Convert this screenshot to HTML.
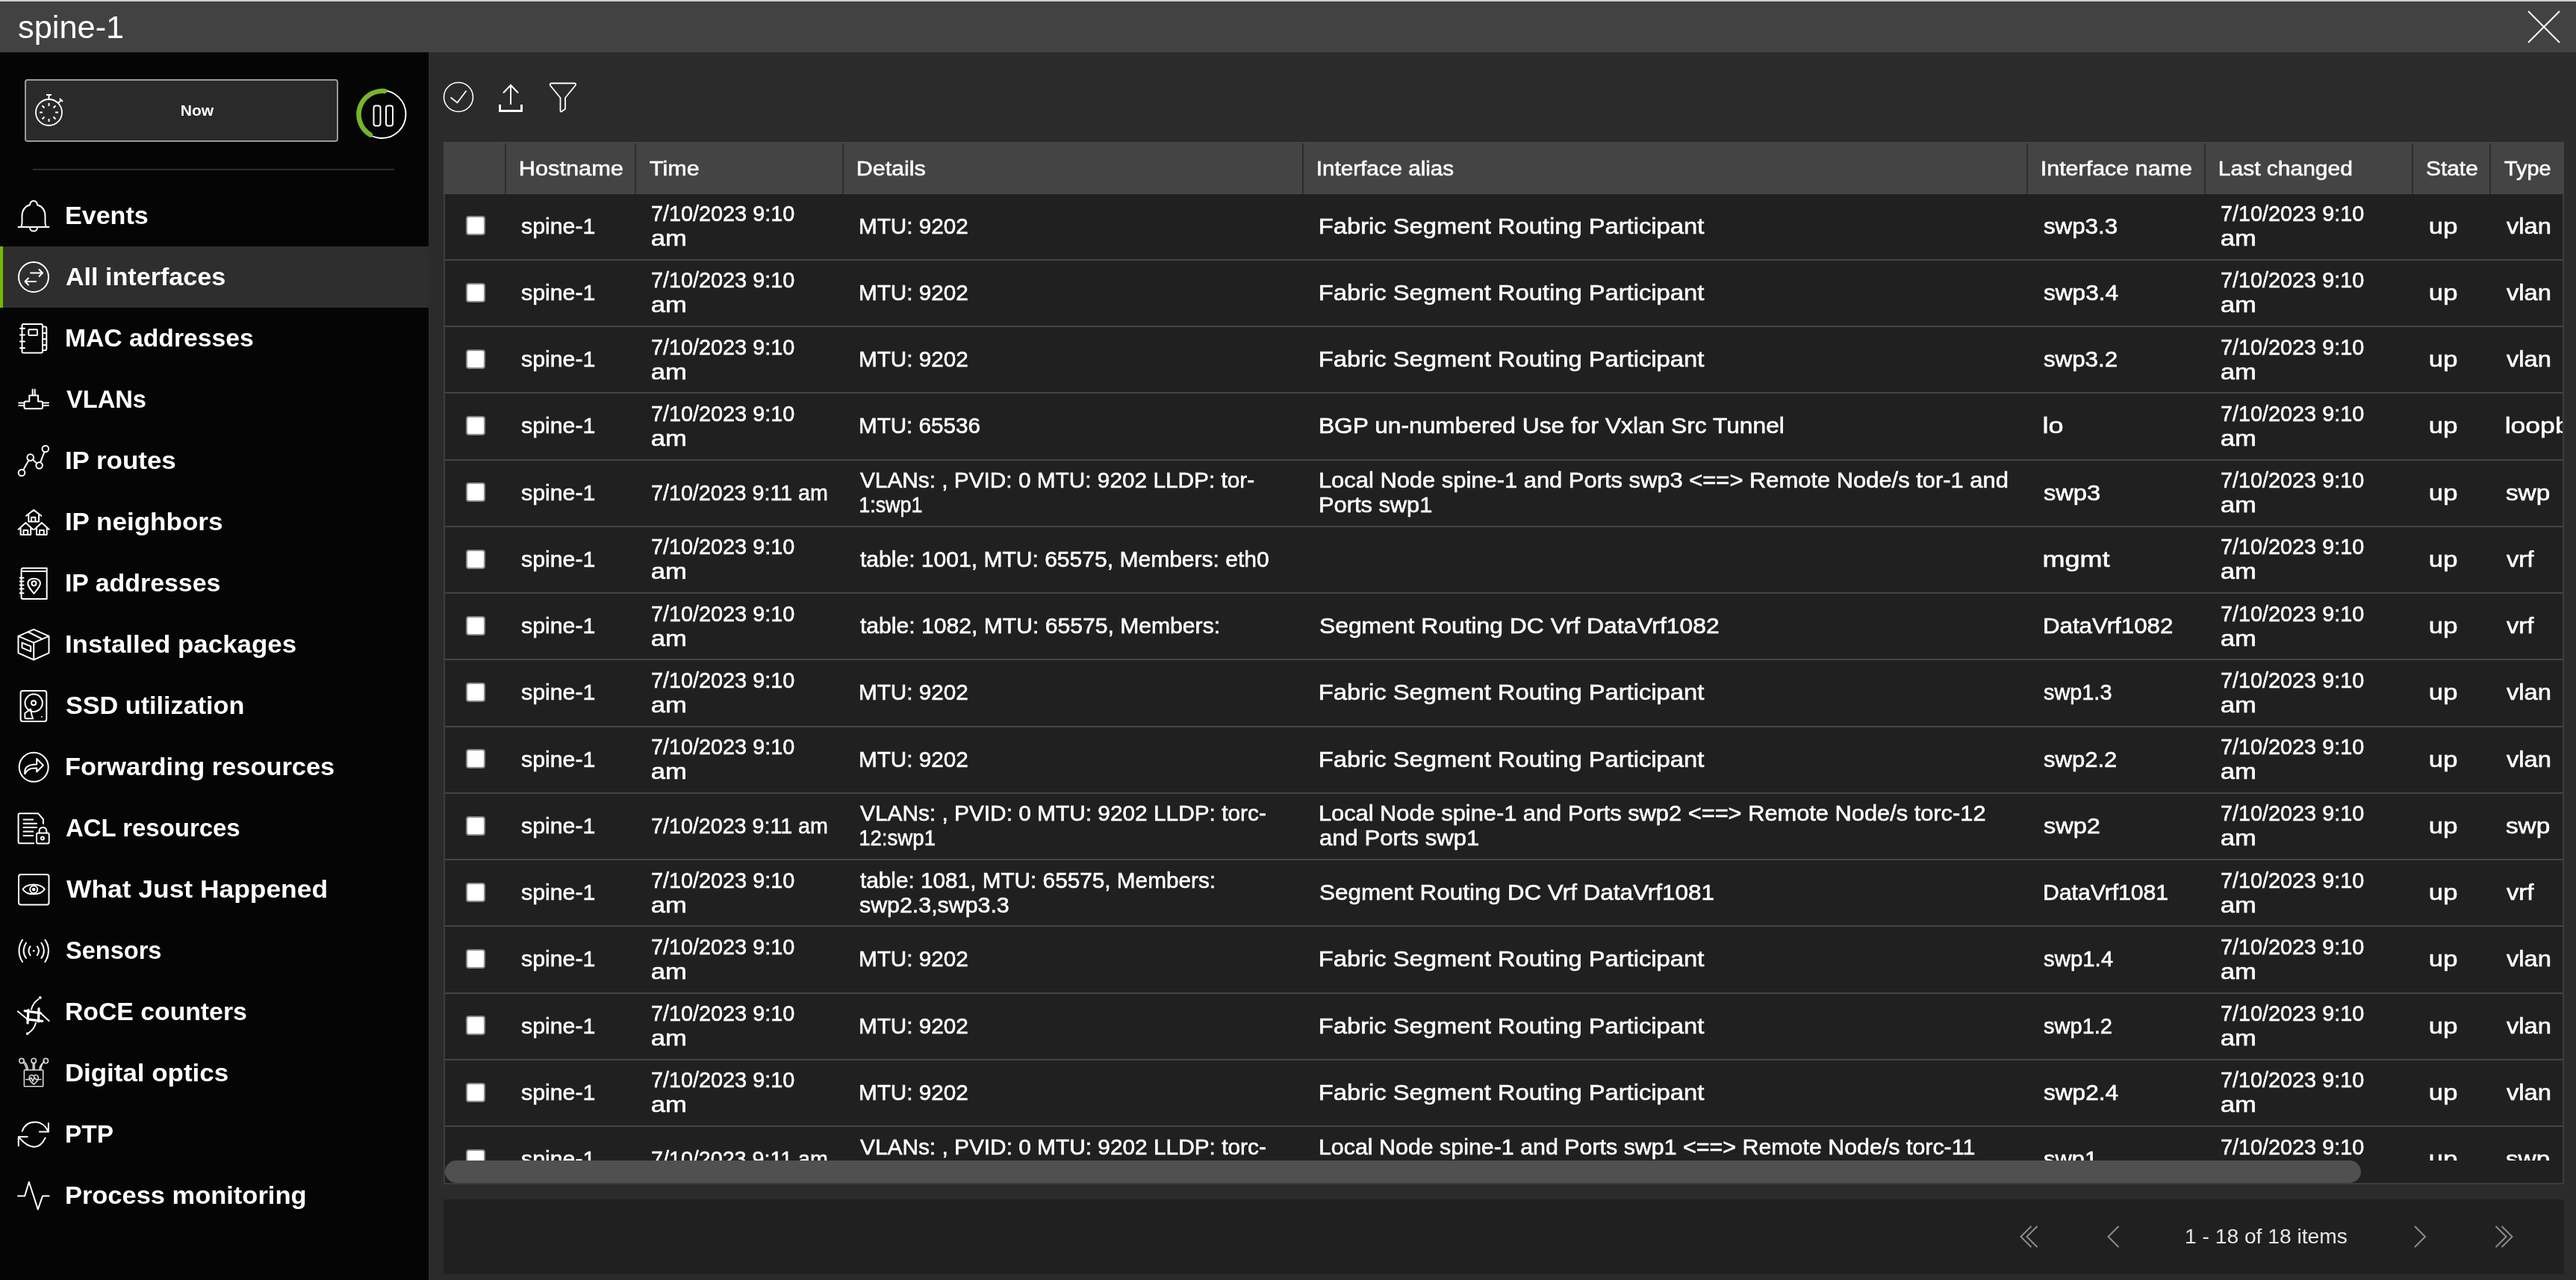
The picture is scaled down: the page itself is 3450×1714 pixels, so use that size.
<!DOCTYPE html>
<html><head><meta charset="utf-8"><title>spine-1</title><style>
*{margin:0;padding:0;box-sizing:border-box}
html,body{width:3450px;height:1714px;overflow:hidden;background:#2b2b2b;font-family:"Liberation Sans", sans-serif;color:#fff}
.abs{position:absolute}
#root{position:absolute;left:0;top:0;width:3450px;height:1714px;will-change:transform}
#topstrip{position:absolute;left:0;top:0;width:3450px;height:2px;background:#cdcdcd}
#title{position:absolute;left:0;top:2px;width:3450px;height:68px;background:#424242}
#title .t{position:absolute;left:24.6px;top:10.8px;font-size:42px;line-height:48px;font-weight:normal;color:#fff}
#side{position:absolute;left:0;top:70px;width:574px;height:1644px;background:#050505}
.active{position:absolute;left:0;width:574px;height:82px;background:#2e2e2e;border-left:4px solid #76b900}
.nic{position:absolute;left:24px}
.nl{position:absolute;left:88.5px;height:82px;line-height:82px;font-size:33px;font-weight:bold;white-space:nowrap}
#table{position:absolute;left:594px;top:190px;width:2840px;height:1396px;border:2px solid #3c3c3c;background:#202020;overflow:hidden}
.hdr{position:absolute;left:594px;top:190px;width:2840px;height:70px;background:#444}
.hc{position:absolute;top:191px;height:70px;line-height:70px;font-size:27px;white-space:nowrap;color:#fafafa;-webkit-text-stroke:0.6px #fafafa}
.hsep{position:absolute;top:192px;width:2px;height:68px;background:#2e2e2e}
.row{position:absolute;left:596px;width:2836px;background:#202020}
.sep{position:absolute;left:596px;width:2836px;height:2px;background:#454545}
.cb{position:absolute;left:624px;width:26px;height:26px;background:#fff;border:2px solid #8a8a8a;border-radius:4px}
.c{position:absolute;display:flex;align-items:center;white-space:nowrap;font-size:30px;line-height:33px;color:#fff;-webkit-text-stroke:0.6px #fff}
#clip{position:absolute;left:596px;top:260px;width:2836px;height:1294px;overflow:hidden}
#clip > div{}
#scroll{position:absolute;left:596px;top:1554px;width:2836px;height:30px;background:#202020}
#thumb{position:absolute;left:596px;top:1554px;width:2566px;height:30px;background:#505050;border-radius:15px}
#pag{position:absolute;left:594px;top:1606px;width:2840px;height:100px;background:#202020}
#pag .t{position:absolute;height:100px;line-height:100px;font-size:28px;color:#e6e6e6;white-space:nowrap}
</style></head>
<body><div id="root">
<div id="topstrip"></div>
<div id="title"><div class="t"><span style="display:inline-block;transform:scaleX(1.0326);transform-origin:1px 50%;margin-left:-1px">spine-1</span></div>
<svg class="abs" style="left:3384px;top:11px" width="46" height="46" viewBox="0 0 46 46"><path d="M2 2 L44 44 M44 2 L2 44" stroke="#fff" stroke-width="2"/></svg>
</div>
<div id="side">
</div>
<div class="abs" style="left:33px;top:106px;width:420px;height:84px;background:#2a2a2a;border:2px solid #9a9a9a;border-radius:4px"></div>
<svg class="abs" style="left:40px;top:120px" width="50" height="52" viewBox="0 0 50 52">
 <circle cx="25.5" cy="30.5" r="17.5" stroke="#fff" stroke-width="1.8" fill="none"/>
 <path d="M25.5 12.5 V7 M22 7 H29 M38 18 L42 14 M40 12 L44 16" stroke="#fff" stroke-width="2" fill="none"/>
 <path d="M25.5 18 V22 M25.5 39 V43 M13 30.5 H17 M34 30.5 H38 M16.5 21.5 L19.5 24.5 M31.5 36.5 L34.5 39.5 M34.5 21.5 L31.5 24.5 M19.5 36.5 L16.5 39.5" stroke="#fff" stroke-width="2" fill="none"/>
</svg>
<div class="abs" style="left:33px;top:106px;width:460px;height:84px;line-height:84px;text-align:center;font-size:21px;font-weight:bold;padding-left:0px;width:462px">Now</div>
<svg class="abs" style="left:474px;top:116px" width="76" height="76" viewBox="0 0 76 76">
 <circle cx="37.5" cy="37" r="32" stroke="#fff" stroke-width="2" fill="none"/>
 <path d="M41 6 A31.5 31.5 0 0 0 22 64.5" stroke="#78b52a" stroke-width="6.5" fill="none" stroke-linecap="round"/>
 <rect x="26.5" y="25.5" width="9" height="27" rx="3" stroke="#fff" stroke-width="2" fill="none"/>
 <rect x="43" y="25.5" width="9" height="27" rx="3" stroke="#fff" stroke-width="2" fill="none"/>
</svg>
<div class="abs" style="left:44px;top:226px;width:484px;height:2px;background:#2c2c2c"></div>
<svg class="nic" style="top:267.7px;overflow:visible" width="42" height="42" viewBox="0 0 42 42"><path d="M0.5 36 H41.5 M4 36 C6 34 5.5 30 5.5 22 C5.5 13 10 8 16 6.5 C16.5 2.5 19 1 21 1 C23 1 25.5 2.5 26 6.5 C32 8 36.5 13 36.5 22 C36.5 30 36 34 38 36 M16 37 C16 43 26 43 26 37" stroke="#fff" fill="none" stroke-width="2" stroke-linecap="round" stroke-linejoin="round"/></svg>
<div class="nl" style="top:247.7px"><span style="display:inline-block;transform:scaleX(1.0333);transform-origin:2px 50%;margin-left:-2px">Events</span></div>
<div class="active" style="top:329.7px"></div>
<svg class="nic" style="top:349.7px;overflow:visible" width="42" height="42" viewBox="0 0 42 42"><circle cx="21" cy="21" r="20" stroke="#fff" fill="none" stroke-width="2" stroke-linecap="round" stroke-linejoin="round"/><path d="M17 15.5 H33 M28.5 11 L33 15.5 L28.5 20 M24 27 H9.5 M14 22.5 L9.5 27 L14 31.5" stroke="#fff" fill="none" stroke-width="2" stroke-linecap="round" stroke-linejoin="round"/></svg>
<div class="nl" style="top:329.7px"><span style="display:inline-block;transform:scaleX(1.0337);transform-origin:1px 50%;margin-left:-1px">All interfaces</span></div>
<svg class="nic" style="top:431.7px;overflow:visible" width="42" height="42" viewBox="0 0 42 42"><rect x="5.5" y="2" width="27.5" height="38.5" rx="2" stroke="#fff" fill="none" stroke-width="2" stroke-linecap="round" stroke-linejoin="round"/><rect x="14.3" y="9.3" width="11.7" height="7.7" rx="1" stroke="#fff" fill="none" stroke-width="2" stroke-linecap="round" stroke-linejoin="round"/><path d="M33 5.5 H37 Q38.3 5.5 38.3 7 V35 Q38.3 37 37 37 H33 M33 14 H38.3 M33 22 H38.3 M33 30 H38.3 M3 7.7 H9 M3 16.5 H9 M3 25.3 H9 M3 34 H9" stroke="#fff" fill="none" stroke-width="2" stroke-linecap="round" stroke-linejoin="round"/></svg>
<div class="nl" style="top:411.7px"><span style="display:inline-block;transform:scaleX(1.0209);transform-origin:2px 50%;margin-left:-2px">MAC addresses</span></div>
<svg class="nic" style="top:513.7px;overflow:visible" width="42" height="42" viewBox="0 0 42 42"><path d="M19.6 7.4 V15.6 M22.7 7.4 V15.6 M15.3 15.6 H27 V23.4 H31 Q33 23.4 33 25.4 V31 Q33 33.2 31 33.2 H10.5 Q8.5 33.2 8.5 31 V25.4 Q8.5 23.4 10.5 23.4 H15.3 Z M1.2 25.4 H8.5 M1.2 28.9 H8.5 M33 25.4 H41 M33 28.9 H41" stroke="#fff" fill="none" stroke-width="2" stroke-linecap="round" stroke-linejoin="round"/></svg>
<div class="nl" style="top:493.7px"><span style="display:inline-block;transform:scaleX(0.9888);transform-origin:0px 50%;margin-left:0px">VLANs</span></div>
<svg class="nic" style="top:595.7px;overflow:visible" width="42" height="42" viewBox="0 0 42 42"><circle cx="5" cy="37" r="4.3" stroke="#fff" fill="none" stroke-width="2" stroke-linecap="round" stroke-linejoin="round"/><circle cx="16.7" cy="16.6" r="4.3" stroke="#fff" fill="none" stroke-width="2" stroke-linecap="round" stroke-linejoin="round"/><circle cx="28.6" cy="27.3" r="4.3" stroke="#fff" fill="none" stroke-width="2" stroke-linecap="round" stroke-linejoin="round"/><circle cx="36.8" cy="5" r="4.3" stroke="#fff" fill="none" stroke-width="2" stroke-linecap="round" stroke-linejoin="round"/><path d="M7.2 33.3 L14.5 20.3 M19.8 19.5 L25.5 24.5 M30 23.3 L35.4 9.1" stroke="#fff" fill="none" stroke-width="2" stroke-linecap="round" stroke-linejoin="round"/></svg>
<div class="nl" style="top:575.7px"><span style="display:inline-block;transform:scaleX(1.0591);transform-origin:2px 50%;margin-left:-2px">IP routes</span></div>
<svg class="nic" style="top:677.7px;overflow:visible" width="42" height="42" viewBox="0 0 42 42"><path d="M11 12.7 L21.2 4.9 L31.3 12.7 M14.3 10.8 V20.6 H28 V10.8 M18 20.6 V14.7 H23.4 V20.6 M0.5 30.9 L10.4 21.9 L20.2 30.9 M3.6 28 V38.1 H17.2 V28 M7.5 38.1 V32 H13.3 V38.1 M22.1 30.9 L31.9 21.9 L41.7 30.9 M25 28 V38.1 H38.7 V28 M29 38.1 V32 H34.8 V38.1" stroke="#fff" fill="none" stroke-width="2" stroke-linecap="round" stroke-linejoin="round"/></svg>
<div class="nl" style="top:657.7px"><span style="display:inline-block;transform:scaleX(1.0617);transform-origin:2px 50%;margin-left:-2px">IP neighbors</span></div>
<svg class="nic" style="top:759.7px;overflow:visible" width="42" height="42" viewBox="0 0 42 42"><path d="M6.5 0.8 H38.7 M6.5 4.9 H38.7 M38.7 0.8 V42 H6.5 Q4.6 42 4.6 40 V4 Q4.6 1 6.5 0.8 M2.6 13.7 H7.5 M2.6 18.6 H7.5 M2.6 23.5 H7.5 M2.6 28.4 H7.5 M2.6 34.2 H7.5" stroke="#fff" fill="none" stroke-width="2" stroke-linecap="round" stroke-linejoin="round"/><path d="M21.5 34.8 C16 28 13.3 25 13.3 21 C13.3 17 17 14.7 21.5 14.7 C26 14.7 30 17 30 21 C30 25 27 28 21.5 34.8 Z" stroke="#fff" fill="none" stroke-width="2" stroke-linecap="round" stroke-linejoin="round"/><circle cx="21.5" cy="21.2" r="3" stroke="#fff" fill="none" stroke-width="2" stroke-linecap="round" stroke-linejoin="round"/></svg>
<div class="nl" style="top:739.7px"><span style="display:inline-block;transform:scaleX(1.0265);transform-origin:2px 50%;margin-left:-2px">IP addresses</span></div>
<svg class="nic" style="top:841.7px;overflow:visible" width="42" height="42" viewBox="0 0 42 42"><path d="M0.5 9.9 L21.2 0.8 L41.5 9.9 L41.5 32.3 L21.2 41.5 L0.5 32.3 Z M0.5 9.9 L21.2 18.6 L41.5 9.9 M21.2 18.6 V41.5 M13.3 4 L33 13.8" stroke="#fff" fill="none" stroke-width="2" stroke-linecap="round" stroke-linejoin="round"/><path d="M5.5 18.6 L17.2 23.5 V30.3 L5.5 25.4 Z" stroke="#fff" fill="none" stroke-width="2" stroke-linecap="round" stroke-linejoin="round"/></svg>
<div class="nl" style="top:821.7px"><span style="display:inline-block;transform:scaleX(1.0569);transform-origin:2px 50%;margin-left:-2px">Installed packages</span></div>
<svg class="nic" style="top:923.7px;overflow:visible" width="42" height="42" viewBox="0 0 42 42"><rect x="3.6" y="1" width="34.7" height="41" rx="3" stroke="#fff" fill="none" stroke-width="2" stroke-linecap="round" stroke-linejoin="round"/><circle cx="21.2" cy="17.3" r="11.7" stroke="#fff" fill="none" stroke-width="2" stroke-linecap="round" stroke-linejoin="round"/><circle cx="21" cy="17.3" r="3" stroke="#fff" fill="none" stroke-width="2" stroke-linecap="round" stroke-linejoin="round"/><path d="M17 25.5 L9.4 31 V36.5 Q9.4 38.2 11 38.2 H20.2 L18.5 33.5 Z" stroke="#fff" fill="none" stroke-width="2" stroke-linecap="round" stroke-linejoin="round"/><circle cx="31.9" cy="35.7" r="1" fill="#fff"/></svg>
<div class="nl" style="top:903.7px"><span style="display:inline-block;transform:scaleX(1.0364);transform-origin:1px 50%;margin-left:-1px">SSD utilization</span></div>
<svg class="nic" style="top:1005.7px;overflow:visible" width="42" height="42" viewBox="0 0 42 42"><circle cx="21.2" cy="21.3" r="19.5" stroke="#fff" fill="none" stroke-width="2" stroke-linecap="round" stroke-linejoin="round"/><path d="M9.4 30.4 C8 22 13 17.5 25.2 17.5 V10 L33.9 18.7 L25.2 27.5 V22.5 C17 22.5 12 24 9.4 30.4 Z" stroke="#fff" fill="none" stroke-width="2" stroke-linecap="round" stroke-linejoin="round"/></svg>
<div class="nl" style="top:985.7px"><span style="display:inline-block;transform:scaleX(1.0423);transform-origin:2px 50%;margin-left:-2px">Forwarding resources</span></div>
<svg class="nic" style="top:1087.7px;overflow:visible" width="42" height="42" viewBox="0 0 42 42"><path d="M21.2 41.2 H2.6 Q0.6 41.2 0.6 39.2 V3.2 Q0.6 1.2 2.6 1.2 H27 L33.9 9 V14.9" stroke="#fff" fill="none" stroke-width="2" stroke-linecap="round" stroke-linejoin="round"/><path d="M7.5 9.4 H20.2 M7.5 14.8 H25 M7.5 20.1 H25 M7.5 25.6 H20.2 M7.5 30.9 H20.2" stroke="#fff" fill="none" stroke-width="2" stroke-linecap="round" stroke-linejoin="round"/><rect x="25" y="27.5" width="16.7" height="14.1" rx="2" stroke="#fff" fill="none" stroke-width="2" stroke-linecap="round" stroke-linejoin="round"/><path d="M28.6 27.5 V24.5 C28.6 18.5 38.3 18.5 38.3 24.5 V27.5" stroke="#fff" fill="none" stroke-width="2" stroke-linecap="round" stroke-linejoin="round"/><circle cx="32.9" cy="34.4" r="2" stroke="#fff" fill="none" stroke-width="2" stroke-linecap="round" stroke-linejoin="round"/></svg>
<div class="nl" style="top:1067.7px"><span style="display:inline-block;transform:scaleX(0.9978);transform-origin:1px 50%;margin-left:-1px">ACL resources</span></div>
<svg class="nic" style="top:1169.7px;overflow:visible" width="42" height="42" viewBox="0 0 42 42"><rect x="1" y="1" width="40.5" height="40.5" rx="3" stroke="#fff" fill="none" stroke-width="2" stroke-linecap="round" stroke-linejoin="round"/><path d="M6.5 20.7 C12 12.5 30 12.5 35.8 20.7 C30 29.5 12 29.5 6.5 20.7 Z" stroke="#fff" fill="none" stroke-width="2" stroke-linecap="round" stroke-linejoin="round"/><circle cx="21.2" cy="21" r="5" stroke="#fff" fill="none" stroke-width="2" stroke-linecap="round" stroke-linejoin="round"/><circle cx="21.2" cy="21" r="1.3" stroke="#fff" fill="none" stroke-width="2" stroke-linecap="round" stroke-linejoin="round"/></svg>
<div class="nl" style="top:1149.7px"><span style="display:inline-block;transform:scaleX(1.0725);transform-origin:0px 50%;margin-left:0px">What Just Happened</span></div>
<svg class="nic" style="top:1251.7px;overflow:visible" width="42" height="42" viewBox="0 0 42 42"><path d="M6 6.6 C0 15 0 27 6 35.9 M36.4 6.6 C42.4 15 42.4 27 36.4 35.9 M11 10.5 C6.5 17 6.5 25 11 31 M31.4 10.5 C36 17 36 25 31.4 31 M16.5 15.4 C14 19 14 23.5 16.5 27.1 M25.9 15.4 C28.4 19 28.4 23.5 25.9 27.1" stroke="#fff" fill="none" stroke-width="2" stroke-linecap="round" stroke-linejoin="round"/><circle cx="21.2" cy="21.3" r="1.3" fill="#fff"/></svg>
<div class="nl" style="top:1231.7px"><span style="display:inline-block;transform:scaleX(0.9859);transform-origin:1px 50%;margin-left:-1px">Sensors</span></div>
<svg class="nic" style="top:1333.7px;overflow:visible" width="42" height="54" viewBox="0 0 42 54"><path d="M9.2 19.7 L30.3 22.7 M28 16.6 L27.5 33.8 M32.7 33.3 L12.5 30.8 M13 35.8 L14 18.3" stroke="#fff" stroke-width="3.3" fill="none" stroke-linecap="round"/><path d="M-0.2 20.3 L12 30.2 M31.3 23.6 L41.6 33 M18 17.5 Q20 9 27.5 4 M24 35.5 Q22 44 14.5 49" stroke="#fff" fill="none" stroke-width="2" stroke-linecap="round" stroke-linejoin="round"/><circle cx="29.8" cy="1.9" r="1.9" fill="#fff"/><circle cx="12.7" cy="50.1" r="1.9" fill="#fff"/></svg>
<div class="nl" style="top:1313.7px"><span style="display:inline-block;transform:scaleX(1.0230);transform-origin:2px 50%;margin-left:-2px">RoCE counters</span></div>
<svg class="nic" style="top:1415.7px;overflow:visible" width="42" height="42" viewBox="0 0 42 42"><g stroke="#d8d8d8" fill="none" stroke-width="1.6" stroke-linejoin="round" stroke-linecap="round"><rect x="8.4" y="16.8" width="25.3" height="22" rx="0.8"/><path d="M11.5 16.8 C11 11 9 8.5 6.5 6.5 M13.3 16.8 C13 10.5 10.5 7.5 7.8 5.2 M20.3 16.8 V7.2 M22.1 16.8 V7.2 M28.8 16.8 C29.2 11 31.5 8.5 34 6.5 M30.6 16.8 C31 10.5 33 7.5 35.5 5.2"/><circle cx="5" cy="4.6" r="3.2"/><circle cx="21.2" cy="4.4" r="3.2"/><circle cx="37.3" cy="4.6" r="3.2"/><path d="M10.8 29.5 H15.5 L17.8 27 L20 32 L22 26.5 L24 29.5 H31"/><path d="M21.2 36 C15.5 31.5 14.5 28.5 15.3 25.8 C16.5 22.8 20 23 21.2 25.3 C22.4 23 25.9 22.8 27.1 25.8 C27.9 28.5 26.9 31.5 21.2 36 Z"/></g></svg>
<div class="nl" style="top:1395.7px"><span style="display:inline-block;transform:scaleX(1.0578);transform-origin:2px 50%;margin-left:-2px">Digital optics</span></div>
<svg class="nic" style="top:1497.7px;overflow:visible" width="42" height="42" viewBox="0 0 42 42"><path d="M5.7 16.6 C9 8 16 4.6 23 4.6 C30 4.6 37 9 40.9 17.6 M40.9 5.9 V17.6 H28.9 M36.6 25.7 C33 33 28 37.7 22 37.7 C14 37.7 8 33 0.8 24.3 M0.8 36.3 V24.3 H12.7" stroke="#fff" fill="none" stroke-width="2" stroke-linecap="round" stroke-linejoin="round"/></svg>
<div class="nl" style="top:1477.7px"><span style="display:inline-block;transform:scaleX(1.0115);transform-origin:2px 50%;margin-left:-2px">PTP</span></div>
<svg class="nic" style="top:1579.7px;overflow:visible" width="42" height="42" viewBox="0 0 42 42"><path d="M0 21.4 H9.2 L14.8 2.8 L26.8 39.4 L33.1 21.4 H41.6" stroke="#fff" fill="none" stroke-width="2" stroke-linecap="round" stroke-linejoin="round"/></svg>
<div class="nl" style="top:1559.7px"><span style="display:inline-block;transform:scaleX(1.0441);transform-origin:2px 50%;margin-left:-2px">Process monitoring</span></div>
<svg class="abs" style="left:590px;top:106px" width="200" height="50" viewBox="590 106 200 50">
 <circle cx="614" cy="130" r="19.5" stroke="#fff" stroke-width="1.6" fill="none"/>
 <path d="M603.5 130.5 L612.5 137.5 L624.5 121.5" stroke="#fff" stroke-width="1.8" fill="none"/>
 <path d="M684 140 V114 M674 124.5 L684 114 L694 124.5" stroke="#fff" stroke-width="2" fill="none"/>
 <path d="M669.5 140 V148.5 H698.5 V140" stroke="#fff" stroke-width="3" fill="none"/>
 <path d="M738 111.5 H770 Q772 112 770.5 114.5 L757 131 V146 L752 149.5 Q750.5 150 750.5 148 V131 L737 114.5 Q736 112 738 111.5 Z" stroke="#fff" stroke-width="1.8" fill="none" stroke-linejoin="round"/>
</svg>
<div id="table"></div>
<div class="hdr"></div>
<div class="hc" style="left:696.5px"><span style="display:inline-block;transform:scaleX(1.1392);transform-origin:2px 50%;margin-left:-2px">Hostname</span></div>
<div class="hc" style="left:869.5px"><span style="display:inline-block;transform:scaleX(1.1310);transform-origin:0px 50%;margin-left:0px">Time</span></div>
<div class="hc" style="left:1148.5px"><span style="display:inline-block;transform:scaleX(1.1275);transform-origin:2px 50%;margin-left:-2px">Details</span></div>
<div class="hc" style="left:1764.7px"><span style="display:inline-block;transform:scaleX(1.0964);transform-origin:2px 50%;margin-left:-2px">Interface alias</span></div>
<div class="hc" style="left:2734.9px"><span style="display:inline-block;transform:scaleX(1.1282);transform-origin:2px 50%;margin-left:-2px">Interface name</span></div>
<div class="hc" style="left:2972.9px"><span style="display:inline-block;transform:scaleX(1.1107);transform-origin:2px 50%;margin-left:-2px">Last changed</span></div>
<div class="hc" style="left:3250.3px"><span style="display:inline-block;transform:scaleX(1.1098);transform-origin:1px 50%;margin-left:-1px">State</span></div>
<div class="hc" style="left:3354.3px"><span style="display:inline-block;transform:scaleX(1.0690);transform-origin:0px 50%;margin-left:0px">Type</span></div>
<div class="hsep" style="left:676.0px"></div>
<div class="hsep" style="left:849.7px"></div>
<div class="hsep" style="left:1127.8px"></div>
<div class="hsep" style="left:1743.6px"></div>
<div class="hsep" style="left:2713.8px"></div>
<div class="hsep" style="left:2952.0px"></div>
<div class="hsep" style="left:3230.0px"></div>
<div class="hsep" style="left:3333.9px"></div>
<div id="clip"><div style="position:absolute;left:-596px;top:-260px;width:3450px;height:1714px">
<div class="row" style="top:259.70px;height:87.25px"></div>
<div class="sep" style="top:346.95px"></div>
<div class="cb" style="top:289.32px"></div>
<div class="c" style="left:699px;top:258.40px;height:87.25px"><span><span style="display:inline-block;transform:scaleX(1.0103);transform-origin:1px 50%;margin-left:-1px">spine-1</span></span></div>
<div class="c" style="left:873px;top:258.40px;height:87.25px"><span><span style="display:inline-block;transform:scaleX(0.9598);transform-origin:1px 50%;margin-left:-1px">7/10/2023 9:10</span><br><span style="display:inline-block;transform:scaleX(1.1538);transform-origin:1px 50%;margin-left:-1px">am</span></span></div>
<div class="c" style="left:1151.8px;top:258.40px;height:87.25px"><span><span style="display:inline-block;transform:scaleX(0.9890);transform-origin:2px 50%;margin-left:-2px">MTU: 9202</span></span></div>
<div class="c" style="left:1768px;top:258.40px;height:87.25px"><span><span style="display:inline-block;transform:scaleX(1.0905);transform-origin:2px 50%;margin-left:-2px">Fabric Segment Routing Participant</span></span></div>
<div class="c" style="left:2737.5px;top:258.40px;height:87.25px"><span><span style="display:inline-block;transform:scaleX(1.0430);transform-origin:1px 50%;margin-left:-1px">swp3.3</span></span></div>
<div class="c" style="left:2975.4px;top:258.40px;height:87.25px"><span><span style="display:inline-block;transform:scaleX(0.9598);transform-origin:1px 50%;margin-left:-1px">7/10/2023 9:10</span><br><span style="display:inline-block;transform:scaleX(1.1538);transform-origin:1px 50%;margin-left:-1px">am</span></span></div>
<div class="c" style="left:3253.8px;top:258.40px;height:87.25px"><span><span style="display:inline-block;transform:scaleX(1.1562);transform-origin:1px 50%;margin-left:-1px">up</span></span></div>
<div class="c" style="left:3357px;top:258.40px;height:87.25px"><span><span style="display:inline-block;transform:scaleX(1.0889);transform-origin:0px 50%;margin-left:0px">vlan</span></span></div>
<div class="row" style="top:348.95px;height:87.25px"></div>
<div class="sep" style="top:436.20px"></div>
<div class="cb" style="top:378.57px"></div>
<div class="c" style="left:699px;top:347.65px;height:87.25px"><span><span style="display:inline-block;transform:scaleX(1.0103);transform-origin:1px 50%;margin-left:-1px">spine-1</span></span></div>
<div class="c" style="left:873px;top:347.65px;height:87.25px"><span><span style="display:inline-block;transform:scaleX(0.9598);transform-origin:1px 50%;margin-left:-1px">7/10/2023 9:10</span><br><span style="display:inline-block;transform:scaleX(1.1538);transform-origin:1px 50%;margin-left:-1px">am</span></span></div>
<div class="c" style="left:1151.8px;top:347.65px;height:87.25px"><span><span style="display:inline-block;transform:scaleX(0.9890);transform-origin:2px 50%;margin-left:-2px">MTU: 9202</span></span></div>
<div class="c" style="left:1768px;top:347.65px;height:87.25px"><span><span style="display:inline-block;transform:scaleX(1.0905);transform-origin:2px 50%;margin-left:-2px">Fabric Segment Routing Participant</span></span></div>
<div class="c" style="left:2737.5px;top:347.65px;height:87.25px"><span><span style="display:inline-block;transform:scaleX(1.0532);transform-origin:1px 50%;margin-left:-1px">swp3.4</span></span></div>
<div class="c" style="left:2975.4px;top:347.65px;height:87.25px"><span><span style="display:inline-block;transform:scaleX(0.9598);transform-origin:1px 50%;margin-left:-1px">7/10/2023 9:10</span><br><span style="display:inline-block;transform:scaleX(1.1538);transform-origin:1px 50%;margin-left:-1px">am</span></span></div>
<div class="c" style="left:3253.8px;top:347.65px;height:87.25px"><span><span style="display:inline-block;transform:scaleX(1.1562);transform-origin:1px 50%;margin-left:-1px">up</span></span></div>
<div class="c" style="left:3357px;top:347.65px;height:87.25px"><span><span style="display:inline-block;transform:scaleX(1.0889);transform-origin:0px 50%;margin-left:0px">vlan</span></span></div>
<div class="row" style="top:438.20px;height:87.25px"></div>
<div class="sep" style="top:525.45px"></div>
<div class="cb" style="top:467.82px"></div>
<div class="c" style="left:699px;top:436.90px;height:87.25px"><span><span style="display:inline-block;transform:scaleX(1.0103);transform-origin:1px 50%;margin-left:-1px">spine-1</span></span></div>
<div class="c" style="left:873px;top:436.90px;height:87.25px"><span><span style="display:inline-block;transform:scaleX(0.9598);transform-origin:1px 50%;margin-left:-1px">7/10/2023 9:10</span><br><span style="display:inline-block;transform:scaleX(1.1538);transform-origin:1px 50%;margin-left:-1px">am</span></span></div>
<div class="c" style="left:1151.8px;top:436.90px;height:87.25px"><span><span style="display:inline-block;transform:scaleX(0.9890);transform-origin:2px 50%;margin-left:-2px">MTU: 9202</span></span></div>
<div class="c" style="left:1768px;top:436.90px;height:87.25px"><span><span style="display:inline-block;transform:scaleX(1.0905);transform-origin:2px 50%;margin-left:-2px">Fabric Segment Routing Participant</span></span></div>
<div class="c" style="left:2737.5px;top:436.90px;height:87.25px"><span><span style="display:inline-block;transform:scaleX(1.0430);transform-origin:1px 50%;margin-left:-1px">swp3.2</span></span></div>
<div class="c" style="left:2975.4px;top:436.90px;height:87.25px"><span><span style="display:inline-block;transform:scaleX(0.9598);transform-origin:1px 50%;margin-left:-1px">7/10/2023 9:10</span><br><span style="display:inline-block;transform:scaleX(1.1538);transform-origin:1px 50%;margin-left:-1px">am</span></span></div>
<div class="c" style="left:3253.8px;top:436.90px;height:87.25px"><span><span style="display:inline-block;transform:scaleX(1.1562);transform-origin:1px 50%;margin-left:-1px">up</span></span></div>
<div class="c" style="left:3357px;top:436.90px;height:87.25px"><span><span style="display:inline-block;transform:scaleX(1.0889);transform-origin:0px 50%;margin-left:0px">vlan</span></span></div>
<div class="row" style="top:527.45px;height:87.25px"></div>
<div class="sep" style="top:614.70px"></div>
<div class="cb" style="top:557.08px"></div>
<div class="c" style="left:699px;top:526.15px;height:87.25px"><span><span style="display:inline-block;transform:scaleX(1.0103);transform-origin:1px 50%;margin-left:-1px">spine-1</span></span></div>
<div class="c" style="left:873px;top:526.15px;height:87.25px"><span><span style="display:inline-block;transform:scaleX(0.9598);transform-origin:1px 50%;margin-left:-1px">7/10/2023 9:10</span><br><span style="display:inline-block;transform:scaleX(1.1538);transform-origin:1px 50%;margin-left:-1px">am</span></span></div>
<div class="c" style="left:1151.8px;top:526.15px;height:87.25px"><span><span style="display:inline-block;transform:scaleX(0.9864);transform-origin:2px 50%;margin-left:-2px">MTU: 65536</span></span></div>
<div class="c" style="left:1768px;top:526.15px;height:87.25px"><span><span style="display:inline-block;transform:scaleX(1.0580);transform-origin:2px 50%;margin-left:-2px">BGP un-numbered Use for Vxlan Src Tunnel</span></span></div>
<div class="c" style="left:2737.5px;top:526.15px;height:87.25px"><span><span style="display:inline-block;transform:scaleX(1.2000);transform-origin:2px 50%;margin-left:-2px">lo</span></span></div>
<div class="c" style="left:2975.4px;top:526.15px;height:87.25px"><span><span style="display:inline-block;transform:scaleX(0.9598);transform-origin:1px 50%;margin-left:-1px">7/10/2023 9:10</span><br><span style="display:inline-block;transform:scaleX(1.1538);transform-origin:1px 50%;margin-left:-1px">am</span></span></div>
<div class="c" style="left:3253.8px;top:526.15px;height:87.25px"><span><span style="display:inline-block;transform:scaleX(1.1562);transform-origin:1px 50%;margin-left:-1px">up</span></span></div>
<div class="c" style="left:3357px;top:526.15px;height:87.25px"><span><span style="display:inline-block;transform:scaleX(1.1864);transform-origin:2px 50%;margin-left:-2px">loopback</span></span></div>
<div class="row" style="top:616.70px;height:87.25px"></div>
<div class="sep" style="top:703.95px"></div>
<div class="cb" style="top:646.33px"></div>
<div class="c" style="left:699px;top:615.40px;height:87.25px"><span><span style="display:inline-block;transform:scaleX(1.0103);transform-origin:1px 50%;margin-left:-1px">spine-1</span></span></div>
<div class="c" style="left:873px;top:615.40px;height:87.25px"><span><span style="display:inline-block;transform:scaleX(0.9553);transform-origin:1px 50%;margin-left:-1px">7/10/2023 9:11 am</span></span></div>
<div class="c" style="left:1151.8px;top:615.40px;height:87.25px"><span><span style="display:inline-block;transform:scaleX(0.9930);transform-origin:0px 50%;margin-left:0px">VLANs: , PVID: 0 MTU: 9202 LLDP: tor-</span><br><span style="display:inline-block;transform:scaleX(0.8967);transform-origin:2px 50%;margin-left:-2px">1:swp1</span></span></div>
<div class="c" style="left:1768px;top:615.40px;height:87.25px"><span><span style="display:inline-block;transform:scaleX(1.0298);transform-origin:2px 50%;margin-left:-2px">Local Node spine-1 and Ports swp3 &lt;==&gt; Remote Node/s tor-1 and</span><br><span style="display:inline-block;transform:scaleX(1.0274);transform-origin:2px 50%;margin-left:-2px">Ports swp1</span></span></div>
<div class="c" style="left:2737.5px;top:615.40px;height:87.25px"><span><span style="display:inline-block;transform:scaleX(1.0882);transform-origin:1px 50%;margin-left:-1px">swp3</span></span></div>
<div class="c" style="left:2975.4px;top:615.40px;height:87.25px"><span><span style="display:inline-block;transform:scaleX(0.9598);transform-origin:1px 50%;margin-left:-1px">7/10/2023 9:10</span><br><span style="display:inline-block;transform:scaleX(1.1538);transform-origin:1px 50%;margin-left:-1px">am</span></span></div>
<div class="c" style="left:3253.8px;top:615.40px;height:87.25px"><span><span style="display:inline-block;transform:scaleX(1.1562);transform-origin:1px 50%;margin-left:-1px">up</span></span></div>
<div class="c" style="left:3357px;top:615.40px;height:87.25px"><span><span style="display:inline-block;transform:scaleX(1.1115);transform-origin:1px 50%;margin-left:-1px">swp</span></span></div>
<div class="row" style="top:705.95px;height:87.25px"></div>
<div class="sep" style="top:793.20px"></div>
<div class="cb" style="top:735.58px"></div>
<div class="c" style="left:699px;top:704.65px;height:87.25px"><span><span style="display:inline-block;transform:scaleX(1.0103);transform-origin:1px 50%;margin-left:-1px">spine-1</span></span></div>
<div class="c" style="left:873px;top:704.65px;height:87.25px"><span><span style="display:inline-block;transform:scaleX(0.9598);transform-origin:1px 50%;margin-left:-1px">7/10/2023 9:10</span><br><span style="display:inline-block;transform:scaleX(1.1538);transform-origin:1px 50%;margin-left:-1px">am</span></span></div>
<div class="c" style="left:1151.8px;top:704.65px;height:87.25px"><span><span style="display:inline-block;transform:scaleX(1.0015);transform-origin:0px 50%;margin-left:0px">table: 1001, MTU: 65575, Members: eth0</span></span></div>
<div class="c" style="left:2737.5px;top:704.65px;height:87.25px"><span><span style="display:inline-block;transform:scaleX(1.2000);transform-origin:2px 50%;margin-left:-2px">mgmt</span></span></div>
<div class="c" style="left:2975.4px;top:704.65px;height:87.25px"><span><span style="display:inline-block;transform:scaleX(0.9598);transform-origin:1px 50%;margin-left:-1px">7/10/2023 9:10</span><br><span style="display:inline-block;transform:scaleX(1.1538);transform-origin:1px 50%;margin-left:-1px">am</span></span></div>
<div class="c" style="left:3253.8px;top:704.65px;height:87.25px"><span><span style="display:inline-block;transform:scaleX(1.1562);transform-origin:1px 50%;margin-left:-1px">up</span></span></div>
<div class="c" style="left:3357px;top:704.65px;height:87.25px"><span><span style="display:inline-block;transform:scaleX(1.0912);transform-origin:0px 50%;margin-left:0px">vrf</span></span></div>
<div class="row" style="top:795.20px;height:87.25px"></div>
<div class="sep" style="top:882.45px"></div>
<div class="cb" style="top:824.83px"></div>
<div class="c" style="left:699px;top:793.90px;height:87.25px"><span><span style="display:inline-block;transform:scaleX(1.0103);transform-origin:1px 50%;margin-left:-1px">spine-1</span></span></div>
<div class="c" style="left:873px;top:793.90px;height:87.25px"><span><span style="display:inline-block;transform:scaleX(0.9598);transform-origin:1px 50%;margin-left:-1px">7/10/2023 9:10</span><br><span style="display:inline-block;transform:scaleX(1.1538);transform-origin:1px 50%;margin-left:-1px">am</span></span></div>
<div class="c" style="left:1151.8px;top:793.90px;height:87.25px"><span><span style="display:inline-block;transform:scaleX(1.0038);transform-origin:0px 50%;margin-left:0px">table: 1082, MTU: 65575, Members:</span></span></div>
<div class="c" style="left:1768px;top:793.90px;height:87.25px"><span><span style="display:inline-block;transform:scaleX(1.0614);transform-origin:1px 50%;margin-left:-1px">Segment Routing DC Vrf DataVrf1082</span></span></div>
<div class="c" style="left:2737.5px;top:793.90px;height:87.25px"><span><span style="display:inline-block;transform:scaleX(1.0424);transform-origin:2px 50%;margin-left:-2px">DataVrf1082</span></span></div>
<div class="c" style="left:2975.4px;top:793.90px;height:87.25px"><span><span style="display:inline-block;transform:scaleX(0.9598);transform-origin:1px 50%;margin-left:-1px">7/10/2023 9:10</span><br><span style="display:inline-block;transform:scaleX(1.1538);transform-origin:1px 50%;margin-left:-1px">am</span></span></div>
<div class="c" style="left:3253.8px;top:793.90px;height:87.25px"><span><span style="display:inline-block;transform:scaleX(1.1562);transform-origin:1px 50%;margin-left:-1px">up</span></span></div>
<div class="c" style="left:3357px;top:793.90px;height:87.25px"><span><span style="display:inline-block;transform:scaleX(1.0912);transform-origin:0px 50%;margin-left:0px">vrf</span></span></div>
<div class="row" style="top:884.45px;height:87.25px"></div>
<div class="sep" style="top:971.70px"></div>
<div class="cb" style="top:914.08px"></div>
<div class="c" style="left:699px;top:883.15px;height:87.25px"><span><span style="display:inline-block;transform:scaleX(1.0103);transform-origin:1px 50%;margin-left:-1px">spine-1</span></span></div>
<div class="c" style="left:873px;top:883.15px;height:87.25px"><span><span style="display:inline-block;transform:scaleX(0.9598);transform-origin:1px 50%;margin-left:-1px">7/10/2023 9:10</span><br><span style="display:inline-block;transform:scaleX(1.1538);transform-origin:1px 50%;margin-left:-1px">am</span></span></div>
<div class="c" style="left:1151.8px;top:883.15px;height:87.25px"><span><span style="display:inline-block;transform:scaleX(0.9890);transform-origin:2px 50%;margin-left:-2px">MTU: 9202</span></span></div>
<div class="c" style="left:1768px;top:883.15px;height:87.25px"><span><span style="display:inline-block;transform:scaleX(1.0905);transform-origin:2px 50%;margin-left:-2px">Fabric Segment Routing Participant</span></span></div>
<div class="c" style="left:2737.5px;top:883.15px;height:87.25px"><span><span style="display:inline-block;transform:scaleX(0.9613);transform-origin:1px 50%;margin-left:-1px">swp1.3</span></span></div>
<div class="c" style="left:2975.4px;top:883.15px;height:87.25px"><span><span style="display:inline-block;transform:scaleX(0.9598);transform-origin:1px 50%;margin-left:-1px">7/10/2023 9:10</span><br><span style="display:inline-block;transform:scaleX(1.1538);transform-origin:1px 50%;margin-left:-1px">am</span></span></div>
<div class="c" style="left:3253.8px;top:883.15px;height:87.25px"><span><span style="display:inline-block;transform:scaleX(1.1562);transform-origin:1px 50%;margin-left:-1px">up</span></span></div>
<div class="c" style="left:3357px;top:883.15px;height:87.25px"><span><span style="display:inline-block;transform:scaleX(1.0889);transform-origin:0px 50%;margin-left:0px">vlan</span></span></div>
<div class="row" style="top:973.70px;height:87.25px"></div>
<div class="sep" style="top:1060.95px"></div>
<div class="cb" style="top:1003.33px"></div>
<div class="c" style="left:699px;top:972.40px;height:87.25px"><span><span style="display:inline-block;transform:scaleX(1.0103);transform-origin:1px 50%;margin-left:-1px">spine-1</span></span></div>
<div class="c" style="left:873px;top:972.40px;height:87.25px"><span><span style="display:inline-block;transform:scaleX(0.9598);transform-origin:1px 50%;margin-left:-1px">7/10/2023 9:10</span><br><span style="display:inline-block;transform:scaleX(1.1538);transform-origin:1px 50%;margin-left:-1px">am</span></span></div>
<div class="c" style="left:1151.8px;top:972.40px;height:87.25px"><span><span style="display:inline-block;transform:scaleX(0.9890);transform-origin:2px 50%;margin-left:-2px">MTU: 9202</span></span></div>
<div class="c" style="left:1768px;top:972.40px;height:87.25px"><span><span style="display:inline-block;transform:scaleX(1.0905);transform-origin:2px 50%;margin-left:-2px">Fabric Segment Routing Participant</span></span></div>
<div class="c" style="left:2737.5px;top:972.40px;height:87.25px"><span><span style="display:inline-block;transform:scaleX(1.0344);transform-origin:1px 50%;margin-left:-1px">swp2.2</span></span></div>
<div class="c" style="left:2975.4px;top:972.40px;height:87.25px"><span><span style="display:inline-block;transform:scaleX(0.9598);transform-origin:1px 50%;margin-left:-1px">7/10/2023 9:10</span><br><span style="display:inline-block;transform:scaleX(1.1538);transform-origin:1px 50%;margin-left:-1px">am</span></span></div>
<div class="c" style="left:3253.8px;top:972.40px;height:87.25px"><span><span style="display:inline-block;transform:scaleX(1.1562);transform-origin:1px 50%;margin-left:-1px">up</span></span></div>
<div class="c" style="left:3357px;top:972.40px;height:87.25px"><span><span style="display:inline-block;transform:scaleX(1.0889);transform-origin:0px 50%;margin-left:0px">vlan</span></span></div>
<div class="row" style="top:1062.95px;height:87.25px"></div>
<div class="sep" style="top:1150.20px"></div>
<div class="cb" style="top:1092.58px"></div>
<div class="c" style="left:699px;top:1061.65px;height:87.25px"><span><span style="display:inline-block;transform:scaleX(1.0103);transform-origin:1px 50%;margin-left:-1px">spine-1</span></span></div>
<div class="c" style="left:873px;top:1061.65px;height:87.25px"><span><span style="display:inline-block;transform:scaleX(0.9553);transform-origin:1px 50%;margin-left:-1px">7/10/2023 9:11 am</span></span></div>
<div class="c" style="left:1151.8px;top:1061.65px;height:87.25px"><span><span style="display:inline-block;transform:scaleX(0.9945);transform-origin:0px 50%;margin-left:0px">VLANs: , PVID: 0 MTU: 9202 LLDP: torc-</span><br><span style="display:inline-block;transform:scaleX(0.9202);transform-origin:2px 50%;margin-left:-2px">12:swp1</span></span></div>
<div class="c" style="left:1768px;top:1061.65px;height:87.25px"><span><span style="display:inline-block;transform:scaleX(1.0265);transform-origin:2px 50%;margin-left:-2px">Local Node spine-1 and Ports swp2 &lt;==&gt; Remote Node/s torc-12</span><br><span style="display:inline-block;transform:scaleX(1.0366);transform-origin:1px 50%;margin-left:-1px">and Ports swp1</span></span></div>
<div class="c" style="left:2737.5px;top:1061.65px;height:87.25px"><span><span style="display:inline-block;transform:scaleX(1.0853);transform-origin:1px 50%;margin-left:-1px">swp2</span></span></div>
<div class="c" style="left:2975.4px;top:1061.65px;height:87.25px"><span><span style="display:inline-block;transform:scaleX(0.9598);transform-origin:1px 50%;margin-left:-1px">7/10/2023 9:10</span><br><span style="display:inline-block;transform:scaleX(1.1538);transform-origin:1px 50%;margin-left:-1px">am</span></span></div>
<div class="c" style="left:3253.8px;top:1061.65px;height:87.25px"><span><span style="display:inline-block;transform:scaleX(1.1562);transform-origin:1px 50%;margin-left:-1px">up</span></span></div>
<div class="c" style="left:3357px;top:1061.65px;height:87.25px"><span><span style="display:inline-block;transform:scaleX(1.1115);transform-origin:1px 50%;margin-left:-1px">swp</span></span></div>
<div class="row" style="top:1152.20px;height:87.25px"></div>
<div class="sep" style="top:1239.45px"></div>
<div class="cb" style="top:1181.83px"></div>
<div class="c" style="left:699px;top:1150.90px;height:87.25px"><span><span style="display:inline-block;transform:scaleX(1.0103);transform-origin:1px 50%;margin-left:-1px">spine-1</span></span></div>
<div class="c" style="left:873px;top:1150.90px;height:87.25px"><span><span style="display:inline-block;transform:scaleX(0.9598);transform-origin:1px 50%;margin-left:-1px">7/10/2023 9:10</span><br><span style="display:inline-block;transform:scaleX(1.1538);transform-origin:1px 50%;margin-left:-1px">am</span></span></div>
<div class="c" style="left:1151.8px;top:1150.90px;height:87.25px"><span><span style="display:inline-block;transform:scaleX(0.9912);transform-origin:0px 50%;margin-left:0px">table: 1081, MTU: 65575, Members:</span><br><span style="display:inline-block;transform:scaleX(1.0117);transform-origin:1px 50%;margin-left:-1px">swp2.3,swp3.3</span></span></div>
<div class="c" style="left:1768px;top:1150.90px;height:87.25px"><span><span style="display:inline-block;transform:scaleX(1.0483);transform-origin:1px 50%;margin-left:-1px">Segment Routing DC Vrf DataVrf1081</span></span></div>
<div class="c" style="left:2737.5px;top:1150.90px;height:87.25px"><span><span style="display:inline-block;transform:scaleX(1.0048);transform-origin:2px 50%;margin-left:-2px">DataVrf1081</span></span></div>
<div class="c" style="left:2975.4px;top:1150.90px;height:87.25px"><span><span style="display:inline-block;transform:scaleX(0.9598);transform-origin:1px 50%;margin-left:-1px">7/10/2023 9:10</span><br><span style="display:inline-block;transform:scaleX(1.1538);transform-origin:1px 50%;margin-left:-1px">am</span></span></div>
<div class="c" style="left:3253.8px;top:1150.90px;height:87.25px"><span><span style="display:inline-block;transform:scaleX(1.1562);transform-origin:1px 50%;margin-left:-1px">up</span></span></div>
<div class="c" style="left:3357px;top:1150.90px;height:87.25px"><span><span style="display:inline-block;transform:scaleX(1.0912);transform-origin:0px 50%;margin-left:0px">vrf</span></span></div>
<div class="row" style="top:1241.45px;height:87.25px"></div>
<div class="sep" style="top:1328.70px"></div>
<div class="cb" style="top:1271.08px"></div>
<div class="c" style="left:699px;top:1240.15px;height:87.25px"><span><span style="display:inline-block;transform:scaleX(1.0103);transform-origin:1px 50%;margin-left:-1px">spine-1</span></span></div>
<div class="c" style="left:873px;top:1240.15px;height:87.25px"><span><span style="display:inline-block;transform:scaleX(0.9598);transform-origin:1px 50%;margin-left:-1px">7/10/2023 9:10</span><br><span style="display:inline-block;transform:scaleX(1.1538);transform-origin:1px 50%;margin-left:-1px">am</span></span></div>
<div class="c" style="left:1151.8px;top:1240.15px;height:87.25px"><span><span style="display:inline-block;transform:scaleX(0.9890);transform-origin:2px 50%;margin-left:-2px">MTU: 9202</span></span></div>
<div class="c" style="left:1768px;top:1240.15px;height:87.25px"><span><span style="display:inline-block;transform:scaleX(1.0905);transform-origin:2px 50%;margin-left:-2px">Fabric Segment Routing Participant</span></span></div>
<div class="c" style="left:2737.5px;top:1240.15px;height:87.25px"><span><span style="display:inline-block;transform:scaleX(0.9787);transform-origin:1px 50%;margin-left:-1px">swp1.4</span></span></div>
<div class="c" style="left:2975.4px;top:1240.15px;height:87.25px"><span><span style="display:inline-block;transform:scaleX(0.9598);transform-origin:1px 50%;margin-left:-1px">7/10/2023 9:10</span><br><span style="display:inline-block;transform:scaleX(1.1538);transform-origin:1px 50%;margin-left:-1px">am</span></span></div>
<div class="c" style="left:3253.8px;top:1240.15px;height:87.25px"><span><span style="display:inline-block;transform:scaleX(1.1562);transform-origin:1px 50%;margin-left:-1px">up</span></span></div>
<div class="c" style="left:3357px;top:1240.15px;height:87.25px"><span><span style="display:inline-block;transform:scaleX(1.0889);transform-origin:0px 50%;margin-left:0px">vlan</span></span></div>
<div class="row" style="top:1330.70px;height:87.25px"></div>
<div class="sep" style="top:1417.95px"></div>
<div class="cb" style="top:1360.33px"></div>
<div class="c" style="left:699px;top:1329.40px;height:87.25px"><span><span style="display:inline-block;transform:scaleX(1.0103);transform-origin:1px 50%;margin-left:-1px">spine-1</span></span></div>
<div class="c" style="left:873px;top:1329.40px;height:87.25px"><span><span style="display:inline-block;transform:scaleX(0.9598);transform-origin:1px 50%;margin-left:-1px">7/10/2023 9:10</span><br><span style="display:inline-block;transform:scaleX(1.1538);transform-origin:1px 50%;margin-left:-1px">am</span></span></div>
<div class="c" style="left:1151.8px;top:1329.40px;height:87.25px"><span><span style="display:inline-block;transform:scaleX(0.9890);transform-origin:2px 50%;margin-left:-2px">MTU: 9202</span></span></div>
<div class="c" style="left:1768px;top:1329.40px;height:87.25px"><span><span style="display:inline-block;transform:scaleX(1.0905);transform-origin:2px 50%;margin-left:-2px">Fabric Segment Routing Participant</span></span></div>
<div class="c" style="left:2737.5px;top:1329.40px;height:87.25px"><span><span style="display:inline-block;transform:scaleX(0.9677);transform-origin:1px 50%;margin-left:-1px">swp1.2</span></span></div>
<div class="c" style="left:2975.4px;top:1329.40px;height:87.25px"><span><span style="display:inline-block;transform:scaleX(0.9598);transform-origin:1px 50%;margin-left:-1px">7/10/2023 9:10</span><br><span style="display:inline-block;transform:scaleX(1.1538);transform-origin:1px 50%;margin-left:-1px">am</span></span></div>
<div class="c" style="left:3253.8px;top:1329.40px;height:87.25px"><span><span style="display:inline-block;transform:scaleX(1.1562);transform-origin:1px 50%;margin-left:-1px">up</span></span></div>
<div class="c" style="left:3357px;top:1329.40px;height:87.25px"><span><span style="display:inline-block;transform:scaleX(1.0889);transform-origin:0px 50%;margin-left:0px">vlan</span></span></div>
<div class="row" style="top:1419.95px;height:87.25px"></div>
<div class="sep" style="top:1507.20px"></div>
<div class="cb" style="top:1449.58px"></div>
<div class="c" style="left:699px;top:1418.65px;height:87.25px"><span><span style="display:inline-block;transform:scaleX(1.0103);transform-origin:1px 50%;margin-left:-1px">spine-1</span></span></div>
<div class="c" style="left:873px;top:1418.65px;height:87.25px"><span><span style="display:inline-block;transform:scaleX(0.9598);transform-origin:1px 50%;margin-left:-1px">7/10/2023 9:10</span><br><span style="display:inline-block;transform:scaleX(1.1538);transform-origin:1px 50%;margin-left:-1px">am</span></span></div>
<div class="c" style="left:1151.8px;top:1418.65px;height:87.25px"><span><span style="display:inline-block;transform:scaleX(0.9890);transform-origin:2px 50%;margin-left:-2px">MTU: 9202</span></span></div>
<div class="c" style="left:1768px;top:1418.65px;height:87.25px"><span><span style="display:inline-block;transform:scaleX(1.0905);transform-origin:2px 50%;margin-left:-2px">Fabric Segment Routing Participant</span></span></div>
<div class="c" style="left:2737.5px;top:1418.65px;height:87.25px"><span><span style="display:inline-block;transform:scaleX(1.0532);transform-origin:1px 50%;margin-left:-1px">swp2.4</span></span></div>
<div class="c" style="left:2975.4px;top:1418.65px;height:87.25px"><span><span style="display:inline-block;transform:scaleX(0.9598);transform-origin:1px 50%;margin-left:-1px">7/10/2023 9:10</span><br><span style="display:inline-block;transform:scaleX(1.1538);transform-origin:1px 50%;margin-left:-1px">am</span></span></div>
<div class="c" style="left:3253.8px;top:1418.65px;height:87.25px"><span><span style="display:inline-block;transform:scaleX(1.1562);transform-origin:1px 50%;margin-left:-1px">up</span></span></div>
<div class="c" style="left:3357px;top:1418.65px;height:87.25px"><span><span style="display:inline-block;transform:scaleX(1.0889);transform-origin:0px 50%;margin-left:0px">vlan</span></span></div>
<div class="row" style="top:1509.20px;height:87.25px"></div>
<div class="sep" style="top:1596.45px"></div>
<div class="cb" style="top:1538.83px"></div>
<div class="c" style="left:699px;top:1507.90px;height:87.25px"><span><span style="display:inline-block;transform:scaleX(1.0103);transform-origin:1px 50%;margin-left:-1px">spine-1</span></span></div>
<div class="c" style="left:873px;top:1507.90px;height:87.25px"><span><span style="display:inline-block;transform:scaleX(0.9553);transform-origin:1px 50%;margin-left:-1px">7/10/2023 9:11 am</span></span></div>
<div class="c" style="left:1151.8px;top:1507.90px;height:87.25px"><span><span style="display:inline-block;transform:scaleX(0.9945);transform-origin:0px 50%;margin-left:0px">VLANs: , PVID: 0 MTU: 9202 LLDP: torc-</span><br><span style="display:inline-block;transform:scaleX(0.9065);transform-origin:2px 50%;margin-left:-2px">11:swp1</span></span></div>
<div class="c" style="left:1768px;top:1507.90px;height:87.25px"><span><span style="display:inline-block;transform:scaleX(1.0127);transform-origin:2px 50%;margin-left:-2px">Local Node spine-1 and Ports swp1 &lt;==&gt; Remote Node/s torc-11</span><br><span style="display:inline-block;transform:scaleX(1.0366);transform-origin:1px 50%;margin-left:-1px">and Ports swp1</span></span></div>
<div class="c" style="left:2737.5px;top:1507.90px;height:87.25px"><span><span style="display:inline-block;transform:scaleX(1.0294);transform-origin:1px 50%;margin-left:-1px">swp1</span></span></div>
<div class="c" style="left:2975.4px;top:1507.90px;height:87.25px"><span><span style="display:inline-block;transform:scaleX(0.9598);transform-origin:1px 50%;margin-left:-1px">7/10/2023 9:10</span><br><span style="display:inline-block;transform:scaleX(1.1538);transform-origin:1px 50%;margin-left:-1px">am</span></span></div>
<div class="c" style="left:3253.8px;top:1507.90px;height:87.25px"><span><span style="display:inline-block;transform:scaleX(1.1562);transform-origin:1px 50%;margin-left:-1px">up</span></span></div>
<div class="c" style="left:3357px;top:1507.90px;height:87.25px"><span><span style="display:inline-block;transform:scaleX(1.1115);transform-origin:1px 50%;margin-left:-1px">swp</span></span></div>
</div></div>
<div id="scroll"></div>
<div id="thumb"></div>
<div id="pag"></div>
<div id="pag"><div class="t" style="left:2334.4px;top:0"><span style="display:inline-block;transform:scaleX(1.0070);transform-origin:2px 50%;margin-left:-2px">1 - 18 of 18 items</span></div></div>
<svg class="abs" style="left:2690px;top:1630px" width="700" height="56" viewBox="2690 1630 700 56">
 <path d="M2720.5 1642 L2706.5 1656 L2720.5 1670 M2728.5 1642 L2714.5 1656 L2728.5 1670" stroke="#8c8c8c" stroke-width="2" fill="none"/>
 <path d="M2837.5 1642 L2823.5 1656 L2837.5 1670" stroke="#8c8c8c" stroke-width="2" fill="none"/>
 <path d="M3234 1642 L3248 1656 L3234 1670" stroke="#8c8c8c" stroke-width="2" fill="none"/>
 <path d="M3342.5 1642 L3356.5 1656 L3342.5 1670 M3350.5 1642 L3364.5 1656 L3350.5 1670" stroke="#8c8c8c" stroke-width="2" fill="none"/>
</svg>
</div></body></html>
